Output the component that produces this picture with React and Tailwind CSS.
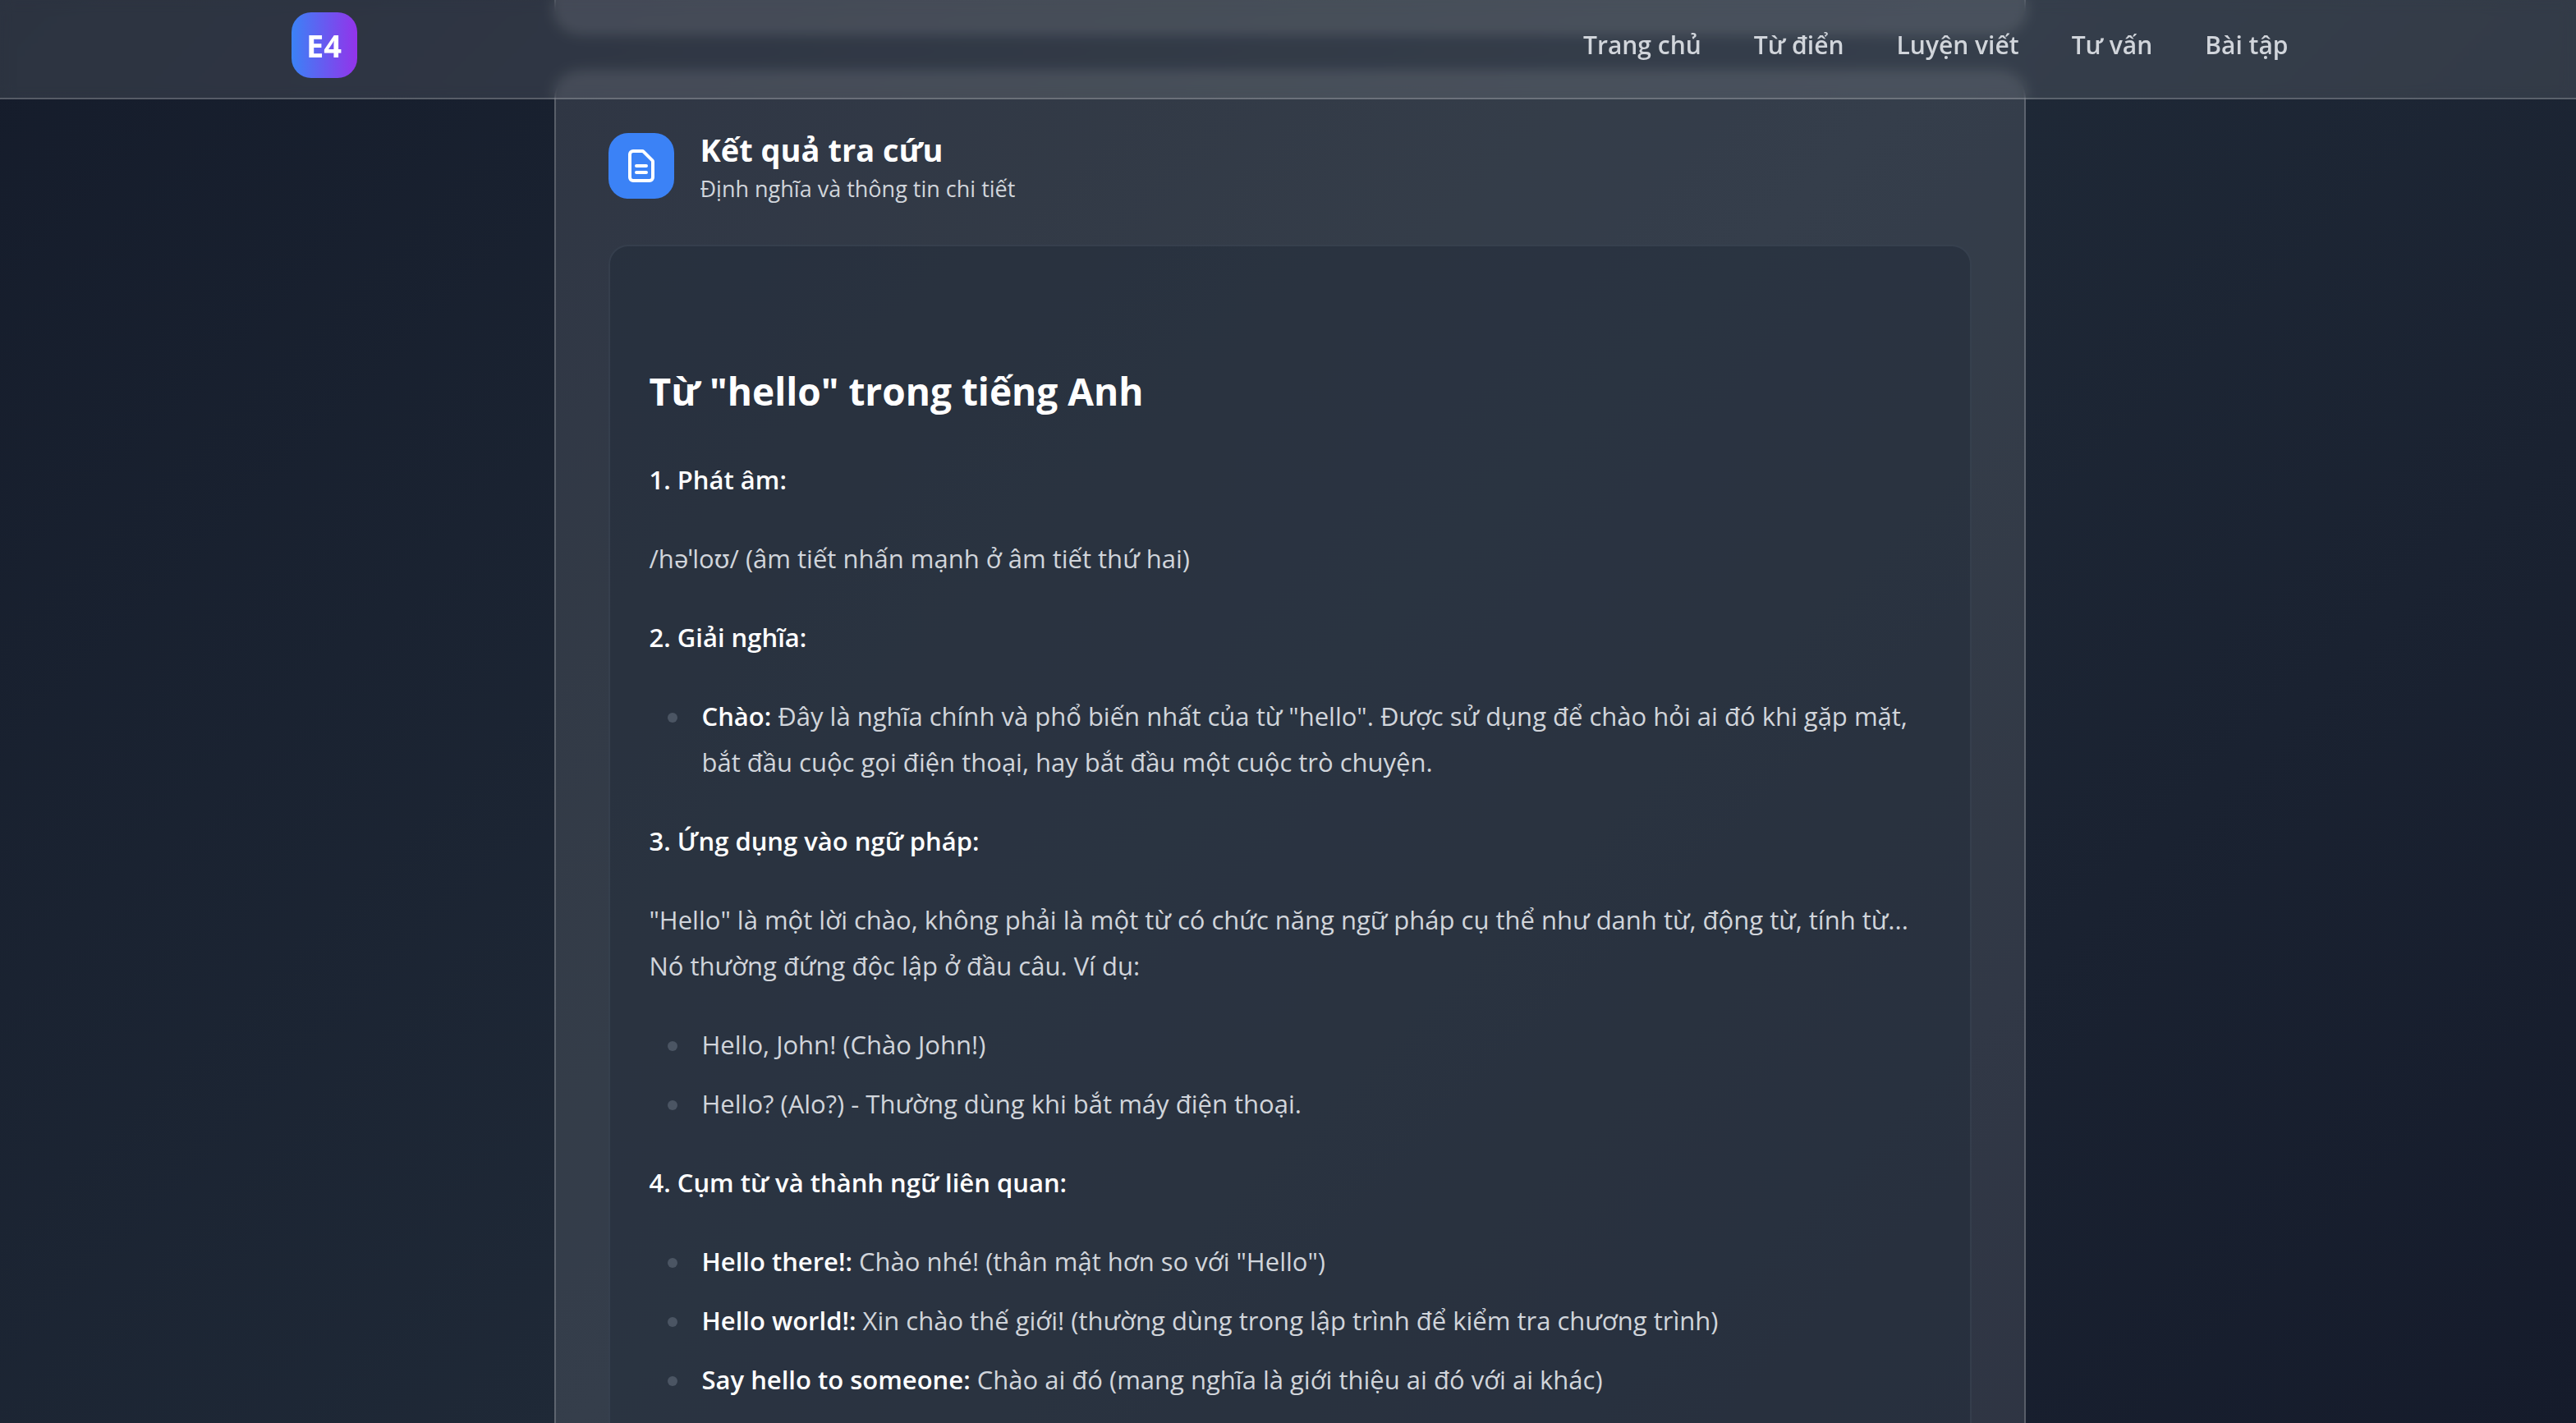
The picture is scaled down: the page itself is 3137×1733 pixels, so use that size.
const NAV_LINKS = ["Trang chủ", "Từ điển", "Luyện viết", "Tư vấn", "Bài tập"];

function Paragraph({ children }) {
  return <p className="mb-10 text-[31px] leading-[56px]">{children}</p>;
}

function Term({ children }) {
  return <strong className="font-semibold text-white">{children}</strong>;
}

function BulletList({ items }) {
  return (
    <ul className="mb-10 flex flex-col gap-4 pl-[22px]">
      {items.map(({ term, text }) => (
        <li key={text} className="flex gap-[30px] text-[31px] leading-[56px]">
          <span className="mt-6 size-3 shrink-0 rounded-full bg-[#4b5563]" aria-hidden="true" />
          <p>
            {term && <><Term>{term}</Term>{" "}</>}
            {text}
          </p>
        </li>
      ))}
    </ul>
  );
}

function DocumentIcon() {
  return (
    <svg className="size-12" viewBox="0 0 24 24" fill="none" stroke="currentColor" strokeWidth="2" strokeLinecap="round" strokeLinejoin="round" aria-hidden="true">
      <path d="M9 12h6m-6 4h6m2 5H7a2 2 0 01-2-2V5a2 2 0 012-2h5.586a1 1 0 01.707.293l5.414 5.414a1 1 0 01.293.707V19a2 2 0 01-2 2z" />
    </svg>
  );
}

function Header() {
  return (
    <header className="fixed inset-x-0 top-0 z-10 border-b-2 border-white/20 bg-white/10 pl-1 backdrop-blur-[8px]">
      <div className="mx-auto flex max-w-[2560px] items-center justify-between px-16 pt-[15px] pb-6">
        <a href="#" className="flex size-20 items-center justify-center rounded-3xl bg-linear-to-r/srgb from-[#3b82f6] to-[#9333ea] text-[38px] font-bold text-white">E4</a>
        <nav className="flex gap-16 text-[30px] leading-12 font-semibold text-[#d1d5db]">
          {NAV_LINKS.map((label) => (
            <a key={label} href="#">{label}</a>
          ))}
        </nav>
      </div>
    </header>
  );
}

export default function App() {
  return (
    <div className="h-screen overflow-hidden bg-[linear-gradient(135deg,#151c2b,#1f2937,#151b2b)] font-['Open_Sans','Noto_Sans',sans-serif] text-[#d1d5db]">
      <Header />
      <main className="pl-1">
        <div className="mx-auto flex max-w-[1792px] flex-col gap-12">
          <div className="h-10 rounded-b-4xl border-2 border-t-0 border-white/20 bg-white/10" />
          <section className="rounded-4xl border-2 border-white/20 bg-white/10 p-16">
            <div className="mb-12 flex items-center gap-8">
              <div className="flex size-20 items-center justify-center rounded-3xl bg-[#3b82f6] text-white">
                <DocumentIcon />
              </div>
              <div>
                <h1 className="text-[38px] leading-14 font-bold text-white">Kết quả tra cứu</h1>
                <p className="text-[27px] leading-10">Định nghĩa và thông tin chi tiết</p>
              </div>
            </div>
            <article className="rounded-3xl border-2 border-[#4b5563]/40 bg-[#1f2937]/50 px-12 pt-36 pb-12">
              <h2 className="mb-12 text-[46px] leading-16 font-bold text-white">Từ "hello" trong tiếng Anh</h2>
              <Paragraph><Term>1. Phát âm:</Term></Paragraph>
              <Paragraph>/həˈloʊ/ (âm tiết nhấn mạnh ở âm tiết thứ hai)</Paragraph>
              <Paragraph><Term>2. Giải nghĩa:</Term></Paragraph>
              <BulletList
                items={[
                  {
                    term: "Chào:",
                    text: 'Đây là nghĩa chính và phổ biến nhất của từ "hello". Được sử dụng để chào hỏi ai đó khi gặp mặt, bắt đầu cuộc gọi điện thoại, hay bắt đầu một cuộc trò chuyện.',
                  },
                ]}
              />
              <Paragraph><Term>3. Ứng dụng vào ngữ pháp:</Term></Paragraph>
              <Paragraph>
                "Hello" là một lời chào, không phải là một từ có chức năng ngữ pháp cụ thể như danh từ, động từ, tính từ... Nó thường đứng độc lập ở đầu câu. Ví dụ:
              </Paragraph>
              <BulletList
                items={[
                  { text: "Hello, John! (Chào John!)" },
                  { text: "Hello? (Alo?) - Thường dùng khi bắt máy điện thoại." },
                ]}
              />
              <Paragraph><Term>4. Cụm từ và thành ngữ liên quan:</Term></Paragraph>
              <BulletList
                items={[
                  { term: "Hello there!:", text: 'Chào nhé! (thân mật hơn so với "Hello")' },
                  { term: "Hello world!:", text: "Xin chào thế giới! (thường dùng trong lập trình để kiểm tra chương trình)" },
                  { term: "Say hello to someone:", text: "Chào ai đó (mang nghĩa là giới thiệu ai đó với ai khác)" },
                ]}
              />
            </article>
          </section>
        </div>
      </main>
    </div>
  );
}
